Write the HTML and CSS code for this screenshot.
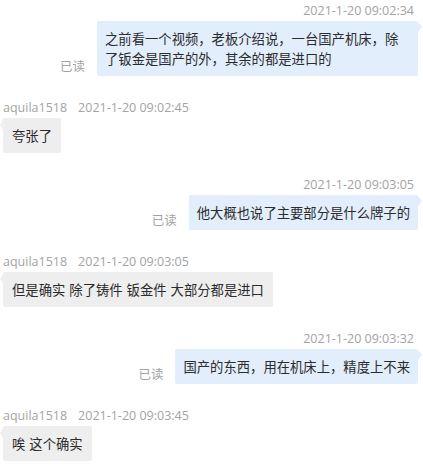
FILE: index.html
```html
<!DOCTYPE html>
<html lang="zh">
<head>
    <meta charset="UTF-8">
    <meta name="viewport" content="width=device-width, initial-scale=1.0">
    <title>聊天记录</title>
    <link rel="stylesheet" href="styles.css">
</head>
<body>
    <div class="chat">
        <div class="msg sent">
            <div class="meta">2021-1-20 09:02:34</div>
            <div class="row">
                <span class="read">已读</span>
                <div class="bubble">之前看一个视频，老板介绍说，一台国产机床，除了钣金是国产的外，其余的都是进口的</div>
            </div>
        </div>

        <div class="msg recv">
            <div class="meta"><span class="name">aquila1518</span><span>2021-1-20 09:02:45</span></div>
            <div class="row">
                <div class="bubble">夸张了</div>
            </div>
        </div>

        <div class="msg sent">
            <div class="meta">2021-1-20 09:03:05</div>
            <div class="row">
                <span class="read">已读</span>
                <div class="bubble">他大概也说了主要部分是什么牌子的</div>
            </div>
        </div>

        <div class="msg recv">
            <div class="meta"><span class="name">aquila1518</span><span>2021-1-20 09:03:05</span></div>
            <div class="row">
                <div class="bubble">但是确实 除了铸件 钣金件 大部分都是进口</div>
            </div>
        </div>

        <div class="msg sent">
            <div class="meta">2021-1-20 09:03:32</div>
            <div class="row">
                <span class="read">已读</span>
                <div class="bubble">国产的东西，用在机床上，精度上不来</div>
            </div>
        </div>

        <div class="msg recv">
            <div class="meta"><span class="name">aquila1518</span><span>2021-1-20 09:03:45</span></div>
            <div class="row">
                <div class="bubble">唉 这个确实</div>
            </div>
        </div>
    </div>
</body>
</html>
```

FILE: styles.css
```css
body {
    margin: 0;
    background: #fff;
    font-family: "Open Sans", "Noto Sans CJK SC", sans-serif;
    color: #333;
}

.chat {
    display: flex;
    flex-direction: column;
    padding: 1.5px 5px 0 3px;
}

.msg {
    display: flex;
    flex-direction: column;
}
.msg + .msg {
    margin-top: 22.5px;
}
.msg.sent {
    align-items: flex-end;
}
.msg.recv {
    align-items: flex-start;
}

.meta {
    font-size: 12.5px;
    line-height: 17px;
    color: #a3a3a3;
    margin-bottom: 2.5px;
    white-space: nowrap;
}
.sent .meta {
    padding-right: 4px;
}
.name {
    margin-right: 11px;
}

.row {
    display: flex;
    align-items: flex-end;
}

.read {
    font-family: "Noto Sans CJK SC", sans-serif;
    font-size: 12.5px;
    line-height: 16px;
    color: #a3a3a3;
    margin-right: 12px;
    margin-bottom: 2px;
    white-space: nowrap;
}

.bubble {
    position: relative;
    font-family: "Noto Sans CJK SC", sans-serif;
    font-size: 13.33px;
    line-height: 20px;
    padding: 7.5px 8px;
    border-radius: 2px;
    max-width: 305px;
    color: #2b2b2b;
}
.sent .bubble {
    background: #e2eefc;
}
.recv .bubble {
    background: #eeeeee;
    padding: 7.5px 9px;
    word-spacing: 1px;
}

/* 气泡小三角 */
.bubble::after {
    content: "";
    position: absolute;
    border-top: 5px solid transparent;
    border-bottom: 5px solid transparent;
}
.sent .bubble::after {
    right: -4px;
    top: 1px;
    border-left: 4px solid #e2eefc;
}
.recv .bubble::after {
    left: -3px;
    top: 2px;
    border-right: 3px solid #eeeeee;
}
```
